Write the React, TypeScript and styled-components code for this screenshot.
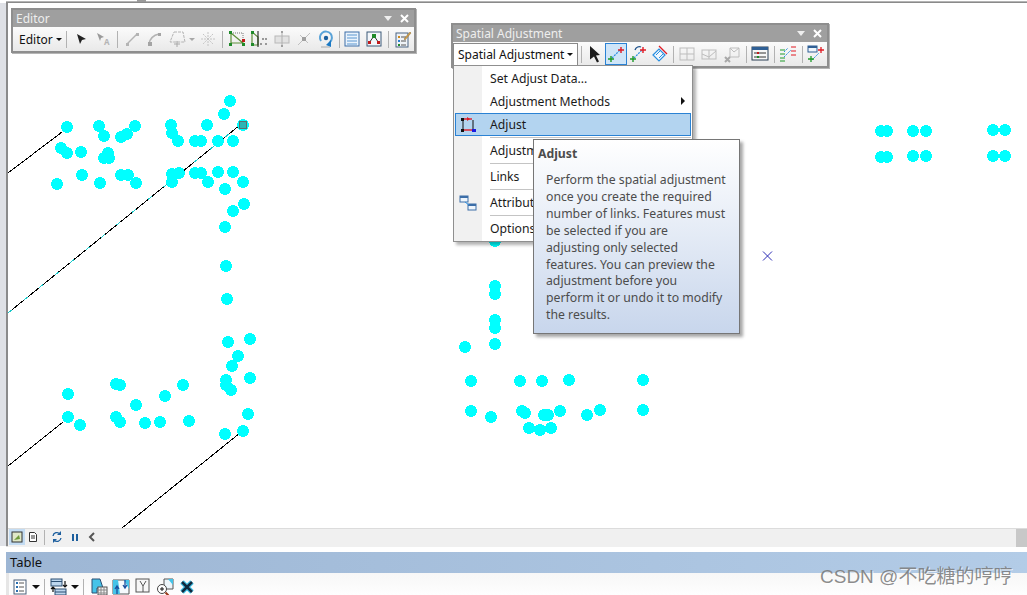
import React from "react";
import styled, { createGlobalStyle } from "styled-components";

const GlobalStyle = createGlobalStyle`
  html, body {
    margin: 0;
    padding: 0;
    background: #fff;
  }
  body {
    font-family: "Noto Sans", "Noto Sans CJK SC", sans-serif;
  }
`;

const Page = styled.div`
  width: 1027px;
  height: 595px;
  display: flex;
  flex-direction: column;
  overflow: hidden;
  position: relative;
  background: #fff;
`;

const TopEdge = styled.div`
  height: 3px;
  flex: none;
  background: linear-gradient(#fff 0 1px, #b4b4b4 1px 2px, #8a8a8a 2px);
  margin-left: 6px;
  position: relative;

  &::after {
    content: "";
    position: absolute;
    left: 131px;
    top: 0;
    width: 9px;
    height: 2px;
    background: #9a9a9a;
  }
`;

const MainRow = styled.div`
  height: 543px;
  flex: none;
  display: flex;
`;

const Rail = styled.div`
  width: 6px;
  flex: none;
  background: #dfe1e6;
`;

const Workspace = styled.div`
  flex: 1;
  display: flex;
  flex-direction: column;
  border-left: 2px solid #8b8b8b;
`;

const MapArea = styled.div`
  height: 525px;
  flex: none;
  position: relative;
  background: #fff;
  border-bottom: 1px solid #dcdcdc;
  box-sizing: content-box;
`;

const MapSvg = styled.svg`
  display: block;
  width: 100%;
  height: 100%;
`;

const FloatBar = styled.div<{ $left: number; $top: number; $width: number }>`
  position: absolute;
  left: ${(p) => p.$left}px;
  top: ${(p) => p.$top}px;
  width: ${(p) => p.$width}px;
  box-sizing: border-box;
  border: 2px solid #8e8e8e;
  background: #9f9f9f;
  box-shadow: 1px 1px 0 #b5b5b5;
`;

const TitleRow = styled.div`
  height: 17px;
  display: flex;
  align-items: center;
  justify-content: space-between;
  padding: 0 5px 0 3px;
  font-size: 12px;
  color: #eeeeee;
`;

const TitleControls = styled.div`
  display: flex;
  align-items: center;
  gap: 8px;
`;

const ToolRow = styled.div`
  height: 24px;
  display: flex;
  align-items: center;
  padding-left: 6px;
  background: linear-gradient(#fbfbfb, #e9e9e9);
  font-size: 12px;
  color: #111;
`;

const DropLabel = styled.div<{ $open?: boolean; $width: number }>`
  width: ${(p) => p.$width}px;
  box-sizing: border-box;
  height: 22px;
  display: flex;
  align-items: center;
  gap: 3px;
  white-space: nowrap;
  ${(p) =>
    p.$open &&
    `background: #fff;
     border: 1px solid #8a8a8a;
     border-bottom: none;
     margin-left: -6px;
     padding-left: 4px;
     position: relative;
     z-index: 3;`}
`;

const Caret = styled.span`
  width: 0;
  height: 0;
  border-left: 3px solid transparent;
  border-right: 3px solid transparent;
  border-top: 3px solid #111;
`;

const Sep = styled.span<{ $h?: number; $m?: number }>`
  width: 1px;
  height: ${(p) => p.$h ?? 17}px;
  margin: 0 ${(p) => p.$m ?? 3}px;
  background: #b2b2b2;
  flex: none;
`;

const Tool = styled.span<{ $w?: number; $active?: boolean }>`
  width: ${(p) => p.$w ?? 22}px;
  height: 22px;
  flex: none;
  box-sizing: border-box;
  display: flex;
  align-items: center;
  justify-content: center;
  ${(p) => p.$active && "background: #cfe5f8; border: 1px solid #2a82d4;"}
`;

const Menu = styled.div`
  position: absolute;
  left: 0;
  top: 40px;
  width: 240px;
  height: 177px;
  box-sizing: border-box;
  border: 1px solid #8f8f8f;
  background: linear-gradient(90deg, #f1f1f1 0 28px, #fff 28px);
  box-shadow: 3px 3px 3px rgba(0, 0, 0, 0.3);
  font-size: 12.2px;
  color: #1a1a1a;
  padding: 1px;
  z-index: 2;
`;

const MenuItem = styled.div<{ $selected?: boolean; $tall?: boolean }>`
  height: ${(p) => (p.$tall ? 25 : 23)}px;
  box-sizing: border-box;
  display: flex;
  align-items: center;
  position: relative;
  ${(p) => p.$selected && "background: #b3d4f0; box-shadow: inset 0 0 0 1px #2a82d4;"}
`;

const MenuIcon = styled.span`
  width: 35px;
  flex: none;
  display: flex;
  justify-content: center;
  padding-right: 10px;
  box-sizing: border-box;
`;

const MenuRule = styled.div<{ $first?: boolean }>`
  height: 1px;
  margin: ${(p) => (p.$first ? "1px" : "0")} 0 0 35px;
  background: #c4c4c4;
`;

const SubArrow = styled.span`
  position: absolute;
  right: 6px;
  top: 7px;
  border-top: 4px solid transparent;
  border-bottom: 4px solid transparent;
  border-left: 4px solid #111;
`;

const Tip = styled.div`
  position: absolute;
  left: 79px;
  top: 73px;
  width: 207px;
  height: 195px;
  box-sizing: border-box;
  border: 1px solid #767676;
  background: linear-gradient(#ffffff, #c8d6ec);
  box-shadow: 3px 3px 3px rgba(0, 0, 0, 0.35);
  color: #4c4c4c;
  font-size: 12.25px;
  padding: 6px 4px;
  z-index: 4;
`;

const TipTitle = styled.div`
  font-weight: bold;
  line-height: 16px;
`;

const TipBody = styled.div`
  margin: 10px 0 0 8px;
  line-height: 16.9px;
  white-space: pre-line;
`;

const StatusBar = styled.div`
  flex: 1;
  display: flex;
  align-items: center;
  background: #f0f0f0;
  position: relative;
  padding: 0 0 2px 1px;
`;

const StatusTool = styled.span<{ $active?: boolean; $w?: number }>`
  width: ${(p) => p.$w ?? 16}px;
  height: 16px;
  display: flex;
  align-items: center;
  justify-content: center;
  flex: none;
  box-sizing: border-box;
  ${(p) => p.$active && "background: #c3dcf3;"}
`;

const ScrollThumb = styled.div`
  position: absolute;
  right: 0;
  top: 0;
  bottom: 0;
  width: 11px;
  background: #c8c8c8;
`;

const Gap = styled.div`
  height: 5px;
  flex: none;
  margin-left: 6px;
  border-top: 1px solid #dedede;
  background: #fff;
`;

const TableHeader = styled.div`
  height: 21px;
  flex: none;
  margin-left: 6px;
  padding: 0 0 1px 4px;
  box-sizing: border-box;
  display: flex;
  align-items: center;
  font-size: 13px;
  color: #111;
  background: linear-gradient(90deg, #9db6d4, #b3cce7);
`;

const TableTools = styled.div`
  flex: 1;
  display: flex;
  align-items: center;
  margin-left: 6px;
  border-left: 3px solid #e6e6e6;
  padding-top: 3px;
  background: linear-gradient(#f7f7f7, #ffffff);
`;

const Watermark = styled.div`
  position: absolute;
  left: 820px;
  top: 566px;
  font-family: "Liberation Sans", "Noto Sans CJK SC", sans-serif;
  font-size: 19px;
  line-height: 22px;
  white-space: nowrap;
  color: rgba(120, 120, 120, 0.85);
  text-shadow: 1px 1px 0 rgba(255, 255, 255, 0.7);
  z-index: 6;
`;

const DOTS: [number, number][] = [
  [67, 127], [99, 126], [104, 136], [121, 137], [127, 134], [135, 126], [171, 125], [172, 133],
  [178, 141], [195, 141], [201, 141], [207, 125], [224, 114], [230, 101], [218, 141], [233, 141],
  [243, 125], [61, 148], [67, 153], [81, 152], [108, 153], [104, 158], [109, 158], [82, 175],
  [57, 184], [100, 183], [121, 175], [128, 175], [136, 183], [172, 174], [179, 173], [172, 182],
  [195, 173], [201, 173], [208, 182], [218, 172], [233, 172], [243, 182], [225, 189], [244, 204],
  [233, 211], [225, 227], [226, 266], [227, 299],
  [228, 342], [250, 339], [238, 356], [232, 366], [250, 378], [226, 380], [226, 385], [231, 390],
  [68, 394], [116, 384], [120, 385], [183, 385], [165, 396], [136, 405], [68, 417], [80, 425],
  [116, 417], [120, 422], [145, 423], [160, 422], [189, 421], [248, 414], [243, 431], [225, 434],
  [495, 241], [495, 286], [495, 294], [495, 320], [495, 328], [495, 344], [465, 347], [471, 381],
  [520, 381], [542, 381], [569, 380], [643, 380], [471, 411], [491, 417], [522, 411], [525, 413],
  [544, 415], [548, 415], [560, 411], [587, 415], [600, 410], [643, 410], [529, 428], [540, 430],
  [551, 428],
  [881, 131], [887, 131], [881, 157], [887, 157], [913, 131], [926, 131], [913, 156], [926, 156],
  [993, 130], [1005, 130], [993, 156], [1005, 156],
];

const MapDrawing = () => (
  <MapSvg viewBox="8 3 1019 525">
    <g stroke="#000" strokeWidth="1" fill="none" shapeRendering="crispEdges">
      <line x1="8" y1="173" x2="62" y2="132" />
      <line x1="8" y1="313" x2="240" y2="125" />
      <line x1="8" y1="466" x2="63" y2="422" />
      <line x1="122" y1="528" x2="240" y2="433" />
    </g>
    <line
      x1="8"
      y1="313"
      x2="240"
      y2="125"
      stroke="#19c8c8"
      strokeWidth="1"
      strokeDasharray="5 15"
      shapeRendering="crispEdges"
    />
    {DOTS.map(([x, y], i) => (
      <circle key={i} cx={x} cy={y} r="6" fill="#00ffff" shapeRendering="crispEdges" />
    ))}
    <rect x="239.5" y="121.5" width="7" height="7" fill="#2cb4b4" stroke="#5f6b6b" />
    <path d="M763 251.5l9 9M772 251.5l-9 9" stroke="#2a2ab4" strokeWidth="1" />
  </MapSvg>
);

type IconProps = { children: React.ReactNode; size?: number };

const Ico = ({ children, size = 18 }: IconProps) => (
  <svg width={size} height={size} viewBox="0 0 18 18" fill="none">
    {children}
  </svg>
);

const CloseGlyph = () => (
  <svg width="9" height="9" viewBox="0 0 9 9">
    <path d="M1 1l7 7M8 1l-7 7" stroke="#fff" strokeWidth="2" />
  </svg>
);

const DownGlyph = () => (
  <svg width="8" height="5" viewBox="0 0 8 5">
    <path d="M0 0h8L4 5z" fill="#eee" />
  </svg>
);

const Pointer = ({ color = "#222" }: { color?: string }) => (
  <Ico>
    <path d="M5 4l9 5-4 1-2 4z" fill={color} />
  </Ico>
);

const LinkArrow = ({ dx = 0 }: { dx?: number }) => (
  <g transform={`translate(${dx} 0)`}>
    <path d="M5 13L13 5" stroke="#2a8fe0" strokeWidth="1.2" strokeDasharray="2 1" />
    <path d="M1 14h6M4 11v6" stroke="#1f9a2a" strokeWidth="1.4" />
    <path d="M11 5h6M14 2v6" stroke="#e01b24" strokeWidth="1.4" />
  </g>
);

const Grey = "#b4b4b4";

const EditorTools = () => (
  <>
    <Tool>
      <Pointer />
    </Tool>
    <Tool>
      <Ico>
        <path d="M3 3l7 4-3 1-1 3z" fill="#9a9a9a" />
        <text x="10" y="15" fontSize="8" fontWeight="bold" fill="#b5b5b5">A</text>
      </Ico>
    </Tool>
    <Sep />
    <Tool>
      <Ico>
        <path d="M4 14L14 4" stroke={Grey} strokeWidth="1.4" />
        <path d="M3 13h3v3H3zM13 3h3v3h-3z" fill={Grey} />
      </Ico>
    </Tool>
    <Tool>
      <Ico>
        <path d="M4 14C5 8 9 5 14 4" stroke={Grey} strokeWidth="1.6" />
        <path d="M3 12h4v4H3zM13 3h3v3h-3z" fill="#a4a4a4" />
      </Ico>
    </Tool>
    <Tool $w={32}>
      <svg width="27" height="18" viewBox="0 0 27 18" fill="none">
        <path d="M6 2h9l2 10H2z" stroke={Grey} strokeDasharray="3 1" />
        <path d="M9 11v6M6 14h6" stroke="#a8a8a8" />
        <path d="M21 8h6l-3 3z" fill="#a8a8a8" />
      </svg>
    </Tool>
    <Tool>
      <Ico>
        <g stroke="#c4c4c4" strokeDasharray="2 1">
          <path d="M9 2v14M2 9h14M4 4l10 10M14 4L4 14" />
        </g>
      </Ico>
    </Tool>
    <Sep />
    <Tool>
      <Ico>
        <path d="M3 3l12 10H3z" stroke="#5f8f3a" strokeWidth="1.2" />
        <path d="M3 3h12v8" stroke="#777" strokeDasharray="1 1" />
        <path d="M1 1h3v3H1zM1 13h3v3H1zM14 13h3v3h-3z" fill="#1f8a2a" />
        <path d="M14 9h3v3h-3z" fill="#c01a1a" />
      </Ico>
    </Tool>
    <Tool>
      <Ico>
        <path d="M2 2l6 5v8H2z" stroke="#5f8f3a" strokeWidth="1.2" />
        <path d="M1 1h3v3H1zM1 13h3v3H1z" fill="#1f8a2a" />
        <path d="M8 1v16" stroke="#111" />
        <path d="M12 8h2v2h-2zM15 8h2v2h-2zM10 13h2v2h-2zM15 13h2v2h-2z" fill="#999" />
      </Ico>
    </Tool>
    <Tool $w={23}>
      <Ico>
        <rect x="2" y="6" width="14" height="7" fill="#e2e2e2" stroke="#b8b8b8" />
        <path d="M9 2v14" stroke="#b0b0b0" />
        <path d="M8 1h2v2H8zM8 15h2v2H8z" fill="#a0a0a0" />
      </Ico>
    </Tool>
    <Tool $w={21}>
      <Ico>
        <path d="M3 15L15 3M5 5l8 8" stroke="#c0c0c0" />
        <rect x="7" y="7" width="4" height="4" fill="#a0a0a0" />
      </Ico>
    </Tool>
    <Tool $w={24}>
      <Ico>
        <path d="M4 11a6 6 0 1 1 9 1" stroke="#5aa3d8" strokeWidth="2" />
        <circle cx="9" cy="8" r="2.2" fill="#1a5f9e" />
        <path d="M9 15l5-5v7z" fill="#1b79c4" />
        <path d="M4 17h9" stroke="#aaa" />
      </Ico>
    </Tool>
    <Sep $m={1} />
    <Tool>
      <Ico>
        <rect x="2" y="2" width="14" height="14" fill="#eaf3fc" stroke="#3c6ea8" />
        <path d="M4 5h10M4 8h10M4 11h10M4 14h10" stroke="#5a96d0" />
      </Ico>
    </Tool>
    <Tool>
      <Ico>
        <rect x="2" y="2" width="14" height="14" fill="#f3f6fa" stroke="#3c5a78" />
        <path d="M4 13l5-7 5 7" stroke="#333" />
        <path d="M7 4h4v4H7z" fill="#1f8a2a" />
        <path d="M3 11h3v3H3zM12 11h3v3h-3z" fill="#c01a1a" />
      </Ico>
    </Tool>
    <Sep />
    <Tool>
      <Ico>
        <rect x="2" y="3" width="12" height="14" fill="#eef2f7" stroke="#4b6584" />
        <path d="M4 6h2v2H4z" fill="#d08a1a" />
        <path d="M4 10h2v2H4z" fill="#2a7fd0" />
        <path d="M4 14h2v2H4z" fill="#1f8a2a" />
        <path d="M7 7h5M7 11h5M7 15h5" stroke="#555" />
        <path d="M10 9l6-7 1 1-6 7z" fill="#d9a24a" stroke="#8a6a2a" strokeWidth="0.5" />
      </Ico>
    </Tool>
  </>
);

const GridGlyph = ({ cross }: { cross?: boolean }) => (
  <Ico>
    <rect x="2" y={cross ? 5 : 3} width="14" height={cross ? 9 : 12} stroke="#bdbdbd" />
    <path d={cross ? "M2 9l7 3 7-6M9 5v9" : "M9 3v12M2 9h14"} stroke="#bdbdbd" />
  </Ico>
);

const SpatialTools = () => (
  <>
    <Tool $w={20}>
      <svg width="14" height="18" viewBox="0 0 14 18">
        <path d="M2 1l10 9-4 .5 3 6-2 1-3-6-4 3z" fill="#1c1c1c" />
      </svg>
    </Tool>
    <Tool $active>
      <Ico>
        <LinkArrow />
      </Ico>
    </Tool>
    <Tool>
      <Ico>
        <LinkArrow />
        <path d="M6 5c1-3 4-4 6-3" stroke="#1a4f8a" strokeWidth="1.3" />
      </Ico>
    </Tool>
    <Tool>
      <Ico>
        <path d="M2 10l6-6 6 6-6 6z" fill="#f1f8ff" stroke="#2a8fe0" strokeWidth="1.2" />
        <path d="M5 10l4-4M8 13l4-4" stroke="#2a8fe0" />
        <path d="M8 1l8 8" stroke="#e01b24" strokeWidth="1.2" />
      </Ico>
    </Tool>
    <Sep $m={2} />
    <Tool>
      <GridGlyph />
    </Tool>
    <Tool>
      <GridGlyph cross />
    </Tool>
    <Tool $w={23}>
      <Ico>
        <path d="M7 3h9v9H7zM7 3l4 4 5-4" stroke="#bdbdbd" />
        <path d="M2 12l5 5M7 12l-5 5" stroke="#a8a8a8" strokeWidth="2" />
      </Ico>
    </Tool>
    <Sep $m={2.5} />
    <Tool>
      <Ico>
        <rect x="1" y="2" width="16" height="13" fill="#f7f7f7" stroke="#2b3f55" />
        <path d="M1 2h16v3H1z" fill="#2f5f95" />
        <path d="M3 8h12M3 12h12" stroke="#333" />
        <path d="M6 7h2v2H6z" fill="#c01a1a" />
        <path d="M6 11h2v2H6z" fill="#1f8a2a" />
      </Ico>
    </Tool>
    <Sep $m={2.5} />
    <Tool>
      <Ico>
        <path d="M5 12L12 5" stroke="#2a8fe0" strokeDasharray="2 1" />
        <path d="M5 7l4-4" stroke="#2a8fe0" strokeDasharray="2 1" />
        <path d="M1 5h5M1 9h5M1 13h5M1 16h5" stroke="#1f9a2a" />
        <path d="M12 2h5M12 6h5M12 10h5" stroke="#e01b24" />
      </Ico>
    </Tool>
    <Sep $m={2.5} />
    <Tool>
      <Ico>
        <rect x="1" y="1" width="9" height="6" fill="#eef5fc" stroke="#2f5f95" />
        <path d="M1 1h9v2H1z" fill="#2f5f95" />
        <path d="M5 15L12 8" stroke="#2a8fe0" strokeDasharray="2 1" />
        <path d="M1 14h6M4 11v6" stroke="#1f9a2a" strokeWidth="1.3" />
        <path d="M11 5h6M14 2v6" stroke="#e01b24" strokeWidth="1.3" />
      </Ico>
    </Tool>
  </>
);

const AdjustIcon = () => (
  <Ico>
    <path d="M4 3v11" stroke="#111" />
    <path d="M14 4v10" stroke="#111" />
    <path d="M3 3h10" stroke="#e01b24" strokeWidth="1.4" />
    <path d="M4 14h10" stroke="#e01b24" strokeWidth="1.4" />
    <path d="M2 2h3v3H2zM2 13h3v3H2z" fill="#111" />
    <path d="M13 13h4v3h-4z" fill="#1a1ae0" />
    <path d="M8 1l3 2-3 2z" fill="#e01b24" />
  </Ico>
);

const AttributeIcon = () => (
  <Ico>
    <rect x="1" y="2" width="8" height="6" fill="#eef5fc" stroke="#3c6ea8" />
    <rect x="9" y="10" width="8" height="6" fill="#eef5fc" stroke="#3c6ea8" />
    <path d="M1 2h8v2H1zM9 10h8v2H9z" fill="#3c6ea8" />
    <path d="M6 8l4 3" stroke="#2a8fe0" />
  </Ico>
);

const TIP_TEXT = `Perform the spatial adjustment
once you create the required
number of links. Features must
be selected if you are
adjusting only selected
features. You can preview the
adjustment before you
perform it or undo it to modify
the results.`;

const AdjustMenu = () => (
  <Menu>
    <MenuItem>
      <MenuIcon />
      Set Adjust Data...
    </MenuItem>
    <MenuItem>
      <MenuIcon />
      Adjustment Methods
      <SubArrow />
    </MenuItem>
    <MenuItem $selected>
      <MenuIcon>
        <AdjustIcon />
      </MenuIcon>
      Adjust
    </MenuItem>
    <MenuRule $first />
    <MenuItem $tall>
      <MenuIcon />
      Adjustm
    </MenuItem>
    <MenuRule />
    <MenuItem $tall>
      <MenuIcon />
      Links
    </MenuItem>
    <MenuRule />
    <MenuItem $tall>
      <MenuIcon>
        <AttributeIcon />
      </MenuIcon>
      Attribut
    </MenuItem>
    <MenuRule />
    <MenuItem $tall>
      <MenuIcon />
      Options
    </MenuItem>
    <Tip>
      <TipTitle>Adjust</TipTitle>
      <TipBody>{TIP_TEXT}</TipBody>
    </Tip>
  </Menu>
);

const BlueStroke = "#1d5f9e";

const StatusTools = () => (
  <>
    <StatusTool $active>
      <svg width="12" height="12" viewBox="0 0 12 12">
        <rect x="1" y="1" width="10" height="10" fill="#dfe8c8" stroke="#333" />
        <path d="M3 9l5-5 1 4z" fill="#6f9a3a" />
      </svg>
    </StatusTool>
    <StatusTool>
      <svg width="12" height="12" viewBox="0 0 12 12" fill="none">
        <path d="M2.5 1.5h5l2 2v7h-7z" fill="#fff" stroke="#333" />
        <path d="M4 5h4M4 7h4" stroke="#333" />
      </svg>
    </StatusTool>
    <Sep $h={15} />
    <StatusTool $w={18}>
      <svg width="12" height="12" viewBox="0 0 12 12" fill="none">
        <path d="M2 5a4 4 0 0 1 7-2M10 7a4 4 0 0 1-7 2" stroke={BlueStroke} strokeWidth="1.3" />
        <path d="M10 0v4H6zM2 12V8h4z" fill={BlueStroke} />
      </svg>
    </StatusTool>
    <StatusTool $w={17}>
      <svg width="8" height="9" viewBox="0 0 8 9">
        <path d="M1 1h2v7H1zM5 1h2v7H5z" fill={BlueStroke} />
      </svg>
    </StatusTool>
    <StatusTool $w={17}>
      <svg width="8" height="10" viewBox="0 0 8 10" fill="none">
        <path d="M6 1L2 5l4 4" stroke="#555" strokeWidth="2" />
      </svg>
    </StatusTool>
    <ScrollThumb />
  </>
);

const TableCaret = styled.span`
  margin: 0 1px;
  width: 0;
  height: 0;
  border-left: 4px solid transparent;
  border-right: 4px solid transparent;
  border-top: 4px solid #111;
`;

const TableToolbar = () => (
  <TableTools>
    <Tool>
      <Ico>
        <rect x="3" y="2" width="12" height="14" fill="#fff" stroke="#4b5f78" />
        <path d="M5 5h2M5 9h2M5 13h2" stroke="#2a6fb0" strokeWidth="2" />
        <path d="M8 5h5M8 9h5M8 13h5" stroke="#555" />
      </Ico>
    </Tool>
    <TableCaret />
    <Sep $h={16} />
    <Tool>
      <Ico>
        <rect x="1" y="1" width="11" height="7" fill="#bcd6ee" stroke="#2c4f73" />
        <rect x="5" y="11" width="11" height="6" fill="#bcd6ee" stroke="#2c4f73" />
        <path d="M1 3.5h11M5 14h11" stroke="#2c4f73" />
        <path d="M15 3v6M13 7l2 2 2-2M3 9v5M1 11l2-2 2 2" stroke="#111" strokeWidth="1.2" />
      </Ico>
    </Tool>
    <TableCaret />
    <Sep $h={16} />
    <Tool $w={23}>
      <Ico>
        <path d="M2 1h8l3 9H7v5H2z" fill="#45c3e8" stroke="#2c4f73" />
        <rect x="8" y="9" width="9" height="8" fill="#f4f4f4" stroke="#555" />
        <path d="M8 12h9M8 15h9M11 9v8M14 9v8" stroke="#888" />
      </Ico>
    </Tool>
    <Tool $w={21}>
      <Ico>
        <path d="M1 2h16v14H1z" fill="#f6fafd" stroke="#555" />
        <path d="M1 2h5l2 14H1zM12 2h5v9z" fill="#45c3e8" />
        <path d="M5 9v7M3 11l2-3 2 3" stroke="#1a4f9e" strokeWidth="1.3" />
        <path d="M13 2v7M11 7l2 3 2-3" stroke="#1a4f9e" strokeWidth="1.3" />
      </Ico>
    </Tool>
    <Tool $w={23}>
      <Ico>
        <rect x="2" y="1" width="13" height="13" fill="#f7f7f7" stroke="#555" />
        <path d="M6 3l3 5v6M12 3L9 8" stroke="#555" />
      </Ico>
    </Tool>
    <Tool $w={21}>
      <Ico>
        <path d="M8 1h9v10H8z" fill="#eef6fb" stroke="#555" />
        <path d="M12 1h5v6z" fill="#45c3e8" />
        <circle cx="6" cy="11" r="4.5" fill="#fff" stroke="#444" />
        <path d="M4 11h4M6 9v4" stroke="#111" />
        <path d="M9.5 14.5l3 3" stroke="#9a3a1a" strokeWidth="2" />
      </Ico>
    </Tool>
    <Tool $w={23}>
      <Ico>
        <path d="M4 4l10 10M14 4L4 14" stroke="#45c3e8" strokeWidth="5" />
        <path d="M4 4l10 10M14 4L4 14" stroke="#0f2a3f" strokeWidth="2.6" />
      </Ico>
    </Tool>
  </TableTools>
);

export default function App() {
  return (
    <Page>
      <GlobalStyle />
      <TopEdge />
      <MainRow>
        <Rail />
        <Workspace>
          <MapArea>
            <MapDrawing />
            <FloatBar $left={3} $top={5} $width={405}>
              <TitleRow>
                Editor
                <TitleControls>
                  <DownGlyph />
                  <CloseGlyph />
                </TitleControls>
              </TitleRow>
              <ToolRow>
                <DropLabel $width={48}>
                  Editor
                  <Caret />
                </DropLabel>
                <Sep />
                <EditorTools />
              </ToolRow>
            </FloatBar>
            <FloatBar $left={443} $top={20} $width={378}>
              <TitleRow>
                Spatial Adjustment
                <TitleControls>
                  <DownGlyph />
                  <CloseGlyph />
                </TitleControls>
              </TitleRow>
              <ToolRow>
                <DropLabel $open $width={125}>
                  Spatial Adjustment
                  <Caret />
                </DropLabel>
                <Sep />
                <SpatialTools />
              </ToolRow>
              <AdjustMenu />
            </FloatBar>
          </MapArea>
          <StatusBar>
            <StatusTools />
          </StatusBar>
        </Workspace>
      </MainRow>
      <Gap />
      <TableHeader>Table</TableHeader>
      <TableToolbar />
      <Watermark>CSDN @不吃糖的哼哼</Watermark>
    </Page>
  );
}
